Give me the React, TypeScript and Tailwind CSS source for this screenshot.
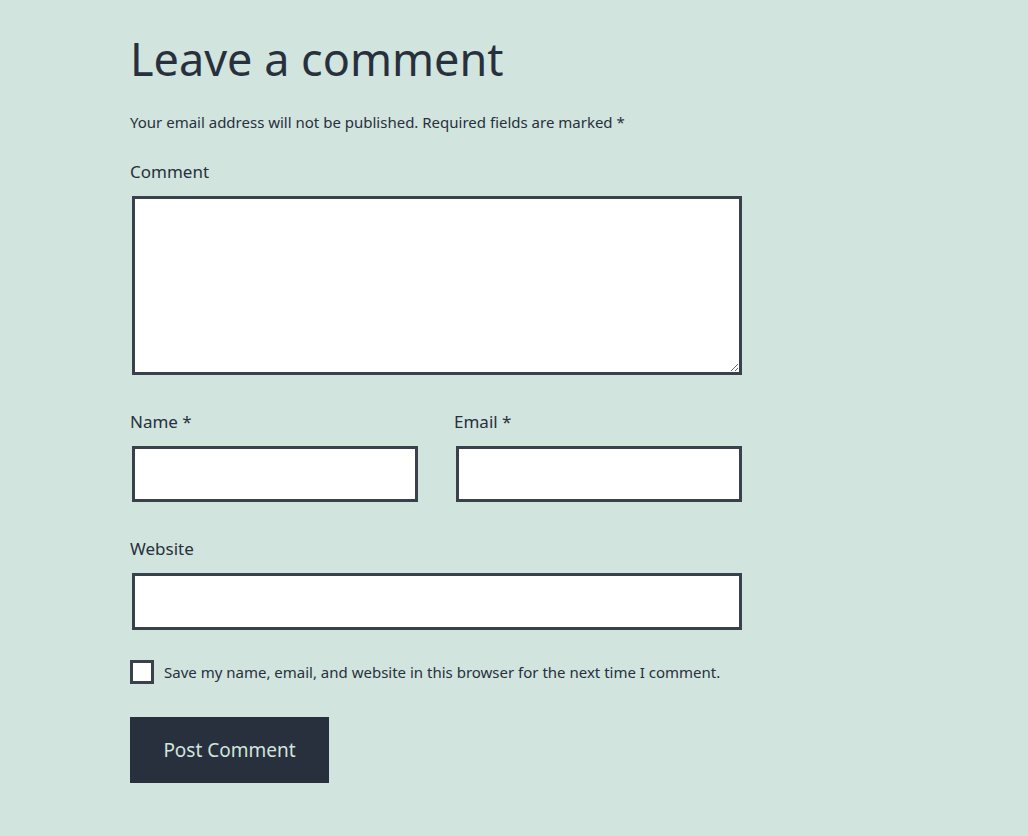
export default function App() {
  return (
    <div className="min-h-screen bg-[#d1e4dd] text-[#28303d] font-['Noto_Sans',sans-serif]">
      <div className="w-[612px] ml-[130px] pt-[30px] pb-[53px]">
        <h2 className="text-[45px] leading-[58px] font-normal">Leave a comment</h2>
        <p className="mt-[22px] text-[15px] leading-[24px]">
          Your email address will not be published. Required fields are marked <span>*</span>
        </p>

        <form className="flex flex-col" onSubmit={(e) => e.preventDefault()}>
          <label className="mt-[25px] flex flex-col text-[17px] leading-[26px]">
            Comment
            <textarea
              className="mt-[11px] ml-[2px] w-[610px] h-[179px] bg-white border-[3px] border-[#39414d] rounded-none outline-none"
            />
          </label>

          <div className="mt-[34px] flex gap-[36px]">
            <label className="w-[288px] flex flex-col text-[17px] leading-[26px]">
              Name *
              <input
                type="text"
                className="mt-[11px] ml-[2px] w-[286px] h-[56px] bg-white border-[3px] border-[#39414d] rounded-none outline-none"
              />
            </label>
            <label className="w-[288px] flex flex-col text-[17px] leading-[26px]">
              Email *
              <input
                type="email"
                className="mt-[11px] ml-[2px] w-[286px] h-[56px] bg-white border-[3px] border-[#39414d] rounded-none outline-none"
              />
            </label>
          </div>

          <label className="mt-[34px] flex flex-col text-[17px] leading-[26px]">
            Website
            <input
              type="url"
              className="mt-[11px] ml-[2px] w-[610px] h-[57px] bg-white border-[3px] border-[#39414d] rounded-none outline-none"
            />
          </label>

          <label className="mt-[30px] flex items-center gap-[10px] text-[15px] leading-[24px] whitespace-nowrap">
            <span className="w-[24px] h-[24px] shrink-0 bg-white border-[3px] border-[#39414d]" />
            Save my name, email, and website in this browser for the next time I comment.
          </label>

          <div className="mt-[33px]">
            <button
              type="submit"
              className="w-[199px] h-[66px] bg-[#28303d] text-[#d1e4dd] text-[19px]"
            >
              Post Comment
            </button>
          </div>
        </form>
      </div>
    </div>
  );
}
